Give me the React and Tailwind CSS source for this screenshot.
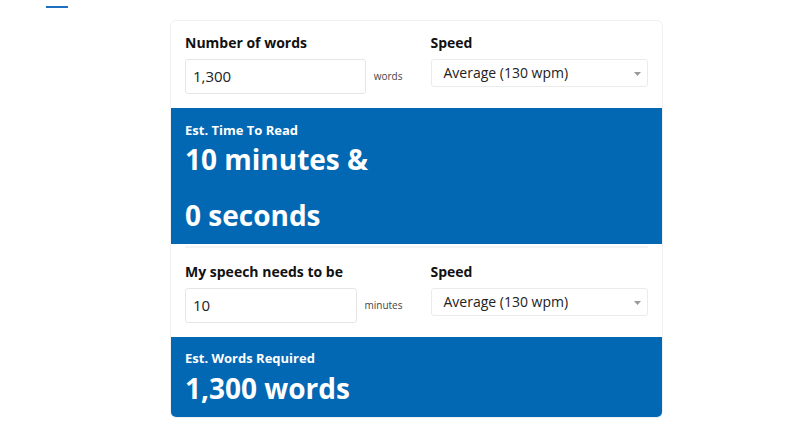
import React from "react";

function Caret() {
  return (
    <svg width="7" height="4" viewBox="0 0 7 4" className="absolute right-[6px] top-[12px]">
      <path d="M0 0 L7 0 L3.5 4 Z" fill="#9a9a9a" />
    </svg>
  );
}

function Select() {
  return (
    <div className="relative h-[28px] w-full rounded-[3px] border border-[#ebebeb] bg-white pl-[12px] text-[14px] leading-[26px] text-[#222]">
      Average (130 wpm)
      <Caret />
    </div>
  );
}

function Row({ label, value, unit, inputW }) {
  return (
    <div className="flex">
      <div className="w-1/2 px-[14px]">
        <div className="text-[14px] font-bold leading-[20px] text-[#111]">{label}</div>
        <div className="mt-[6px] flex items-center">
          <div className={`h-[35px] ${inputW} rounded-[3px] border border-[#e6e6e6] bg-white pl-[7px] text-[15px] leading-[33px] text-[#222]`}>
            {value}
          </div>
          <div className="ml-[8px] text-[10px] text-[#444]">{unit}</div>
        </div>
      </div>
      <div className="w-1/2 px-[14px]">
        <div className="text-[14px] font-bold leading-[20px] text-[#111]">Speed</div>
        <div className="mt-[6px]">
          <Select />
        </div>
      </div>
    </div>
  );
}

export default function App() {
  return (
    <div
      className="relative h-[432px] w-[799px] overflow-hidden bg-white"
      style={{ fontFamily: '"Open Sans", "Noto Sans", sans-serif' }}
    >
      <div className="absolute left-[46px] top-[6px] h-[2px] w-[22px] bg-[#1f6fc0]" />
      <div className="ml-[170px] pt-[20px]">
        <div className="w-[493px] overflow-hidden rounded-[6px] border border-[#f0f0f0] bg-white">
          <div className="pb-[14px] pt-[12px]">
            <Row label="Number of words" value="1,300" unit="words" inputW="w-[184px]" />
          </div>
          <div className="bg-[#0268b3] px-[14px] pb-[1px] pt-[13px] text-white">
            <div className="text-[13px] font-bold leading-[18px]">Est. Time To Read</div>
            <div className="mt-[-8px] text-[28px] font-bold leading-[56px]">
              10 minutes &amp;
              <br />0 seconds
            </div>
          </div>
          <div className="px-[14px]">
            <div className="mt-[2px] h-[2px] bg-[#f3f3f3]" />
          </div>
          <div className="pb-[14px] pt-[14px]">
            <Row label="My speech needs to be" value="10" unit="minutes" inputW="w-[175px]" />
          </div>
          <div className="bg-[#0268b3] px-[14px] pb-[11px] pt-[12px] text-white">
            <div className="text-[13px] font-bold leading-[18px]">Est. Words Required</div>
            <div className="mt-[3px] text-[28px] font-bold leading-[36px]">1,300 words</div>
          </div>
        </div>
      </div>
    </div>
  );
}
